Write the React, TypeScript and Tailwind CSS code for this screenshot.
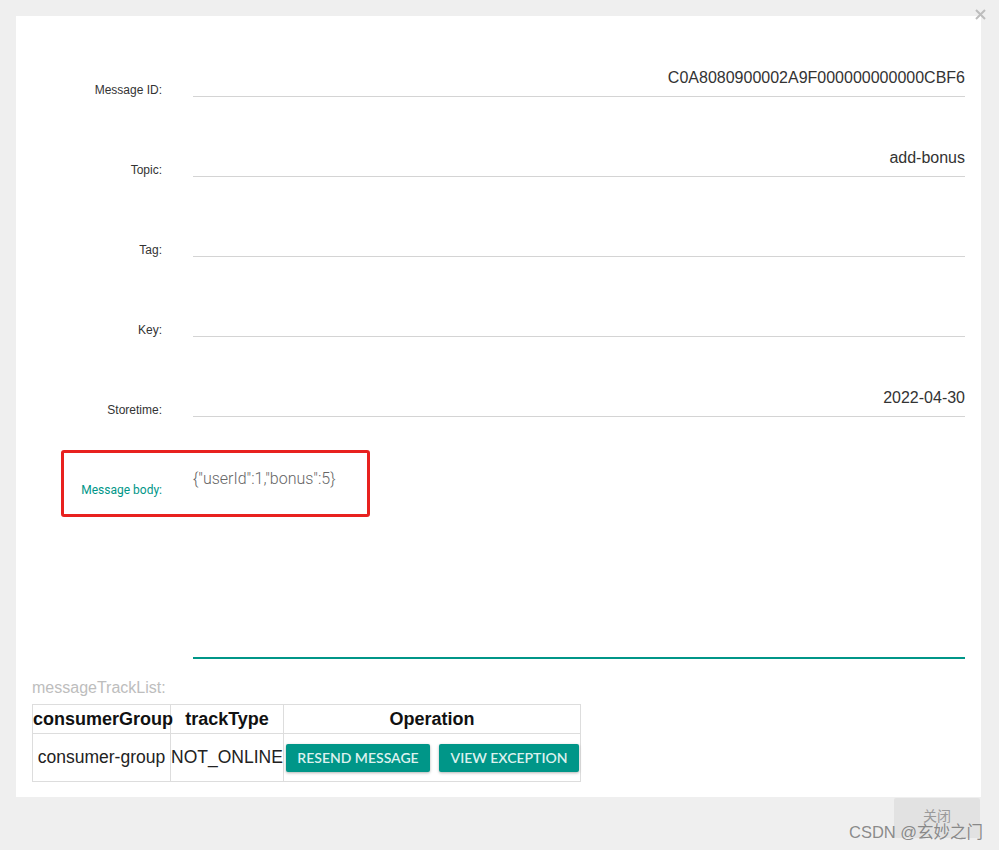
import React from "react";

const rows = [
  { label: "Message ID:", value: "C0A8080900002A9F000000000000CBF6" },
  { label: "Topic:", value: "add-bonus" },
  { label: "Tag:", value: "" },
  { label: "Key:", value: "" },
  { label: "Storetime:", value: "2022-04-30" },
];

export default function App() {
  return (
    <div className="relative w-[999px] h-[850px] bg-[#efefef] pt-[16px] overflow-hidden" style={{ fontFamily: '"Liberation Sans", Arial, sans-serif' }}>
      {/* close X */}
      <svg className="absolute left-[975px] top-[9px]" width="11" height="11" viewBox="0 0 11 11">
        <path d="M1 1 L10 10 M10 1 L1 10" stroke="#bdbdbd" strokeWidth="2" />
      </svg>

      <div className="ml-[16px] w-[965px] h-[781px] bg-white pt-[1px] flex flex-col">
        {rows.map((r) => (
          <div key={r.label} className="flex items-end h-[80px]">
            <div className="w-[146px] text-right text-[12px] leading-[14px] text-[#333]">{r.label}</div>
            <div className="ml-[31px] mr-[16px] flex-1 border-b border-[#d4d4d4] text-right text-[16px] leading-[20px] text-[#333] pb-[8px] h-[29px]">
              {r.value}
            </div>
          </div>
        ))}

        <div className="flex h-[242px]">
          <div className="w-[146px] text-right text-[12px] leading-[14px] text-[#009688] mt-[66px]" style={{ fontFamily: 'Roboto, "Liberation Sans", sans-serif' }}>
            Message body:
          </div>
          <div className="ml-[31px] mr-[16px] flex-1 border-b-2 border-[#009688] pt-[52px] text-[16px] leading-[20px] text-[#666] font-light" style={{ fontFamily: 'Roboto, "Liberation Sans", sans-serif' }}>
            {'{"userId":1,"bonus":5}'}
          </div>
        </div>

        <div className="mt-[19px] ml-[16px] text-[16px] leading-[20px] text-[#bdbdbd]">messageTrackList:</div>

        <table className="mt-[6px] ml-[16px] w-[548px] border-collapse border border-[#dddddd] table-fixed">
          <colgroup>
            <col className="w-[138px]" />
            <col className="w-[113px]" />
            <col className="w-[297px]" />
          </colgroup>
          <thead>
            <tr className="h-[29px]">
              <th className="border border-[#dddddd] text-[18px] font-bold text-[#111] p-0 whitespace-nowrap">consumerGroup</th>
              <th className="border border-[#dddddd] text-[18px] font-bold text-[#111] p-0">trackType</th>
              <th className="border border-[#dddddd] text-[18px] font-bold text-[#111] p-0">Operation</th>
            </tr>
          </thead>
          <tbody>
            <tr className="h-[48px]">
              <td className="border border-[#dddddd] text-[17.5px] text-center text-[#222] p-0 whitespace-nowrap">consumer-group</td>
              <td className="border border-[#dddddd] text-[17.5px] text-left text-[#222] p-0 whitespace-nowrap overflow-visible">NOT_ONLINE</td>
              <td className="border border-[#dddddd] p-0">
                <div className="flex items-center gap-[9px] pl-[2px]" style={{ fontFamily: 'Lato, "Open Sans", sans-serif' }}>
                  <button className="w-[144px] h-[28px] bg-[#009688] text-[#dcf1ee] text-[14px] font-semibold rounded-[2px] shadow-[0_1px_3px_rgba(0,0,0,0.3)]">RESEND MESSAGE</button>
                  <button className="w-[140px] h-[28px] bg-[#009688] text-[#dcf1ee] text-[14px] font-semibold rounded-[2px] shadow-[0_1px_3px_rgba(0,0,0,0.3)]">VIEW EXCEPTION</button>
                </div>
              </td>
            </tr>
          </tbody>
        </table>
      </div>

      <div className="flex justify-end pr-[19px] pt-[1px]">
        <div className="w-[86px] h-[40px] bg-[#e2e2e2] rounded-[2px] flex items-start justify-center pt-[7px] text-[14px] leading-[20px] text-[#9a9a9a]" style={{ fontFamily: '"Noto Sans CJK SC", sans-serif' }}>
          关闭
        </div>
      </div>

      {/* red annotation box */}
      <div className="absolute left-[61px] top-[450px] w-[309px] h-[67px] border-[3px] border-[#e8211f] rounded-[3px]" />

      {/* watermark */}
      <div className="absolute left-[849px] top-[821px] text-[16.5px] leading-[22px] text-[#707070]/80" style={{ fontFamily: '"Liberation Sans", "Noto Sans CJK SC", sans-serif' }}>
        CSDN @玄妙之门
      </div>
    </div>
  );
}
